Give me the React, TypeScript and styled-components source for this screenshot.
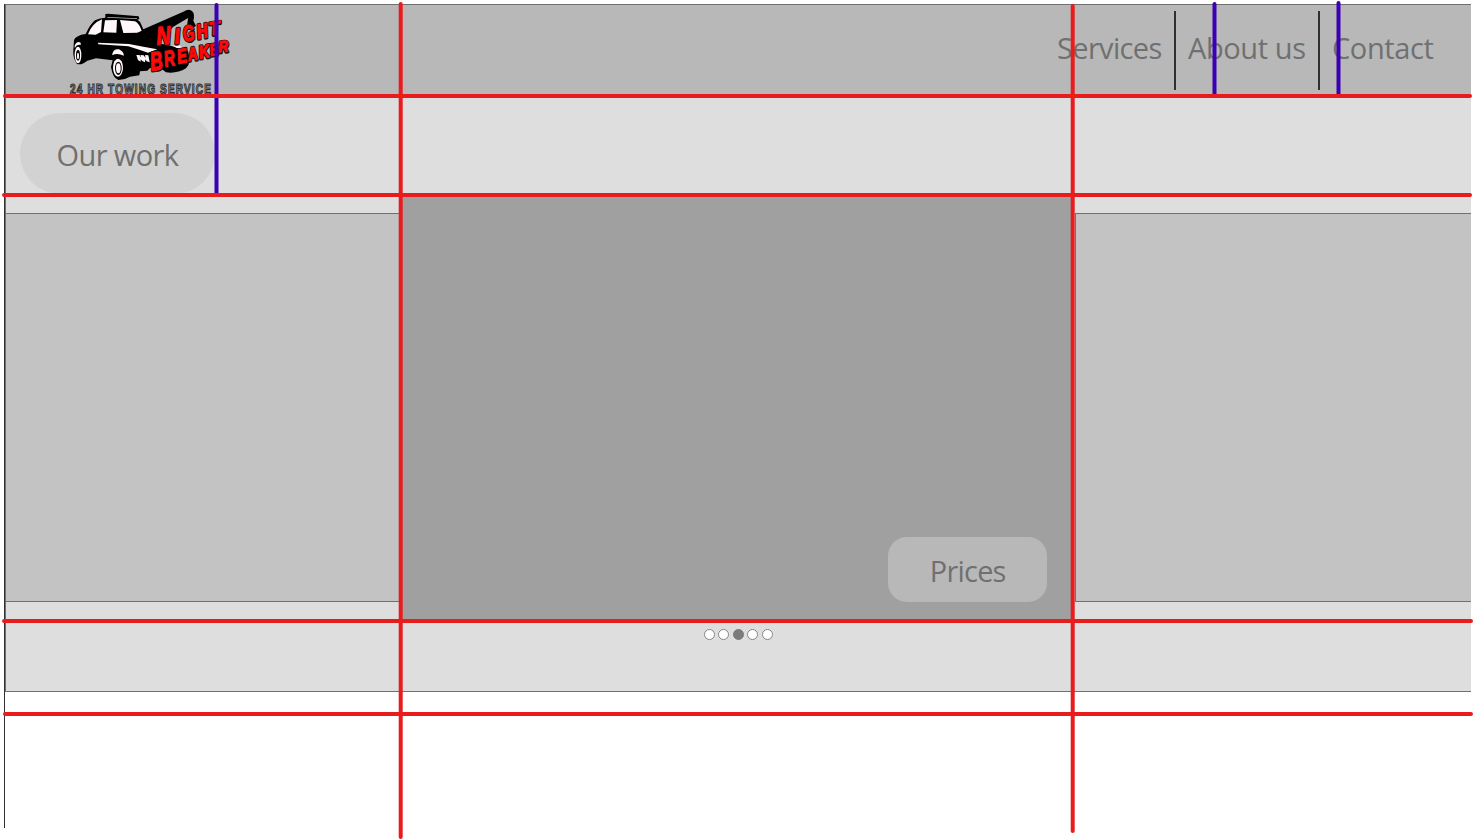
import React from "react";
import styled, { createGlobalStyle } from "styled-components";

const GlobalStyle = createGlobalStyle`
  * { box-sizing: border-box; }
  html, body { margin: 0; padding: 0; background: #ffffff; }
  body { font-family: "Open Sans", "Noto Sans", sans-serif; color: #707070; overflow: hidden; }
`;

const Page = styled.div`
  position: relative;
  width: 1473px;
  height: 839px;
  padding: 4px 2px 11px 4px;
  overflow: hidden;
`;

const Frame = styled.div`
  height: 824px;
  border-left: 1px solid #303030;
`;

const Header = styled.header`
  display: flex;
  justify-content: space-between;
  height: 92px;
  padding-left: 55px;
  padding-right: 25px;
  background: #b8b8b8;
  border-top: 1px solid #707070;
  border-left: 1px solid #707070;
`;

const LogoArt = styled.svg`
  display: block;
  width: 180px;
  height: 91px;
  margin-left: -1px;
`;

const Nav = styled.nav`
  display: flex;
  padding-top: 6px;
`;

const NavItem = styled.a<{ $width: number; $divided?: boolean }>`
  width: ${(p) => p.$width}px;
  height: 79px;
  padding-left: 12px;
  padding-top: 17px;
  border-left: ${(p) => (p.$divided ? "2px solid #303030" : "0")};
  font-size: 29px;
  line-height: 40px;
  white-space: nowrap;
`;

const Label = styled.span<{ $spacing: number }>`
  letter-spacing: ${(p) => p.$spacing}px;
  white-space: nowrap;
`;

const Work = styled.main`
  height: 596px;
  background: #dedede;
  border-left: 1px solid #707070;
  border-bottom: 1px solid #707070;
`;

const TitleRow = styled.div`
  height: 99px;
  padding: 17px 0 0 14px;
`;

const Pill = styled.h1`
  width: 195px;
  height: 81px;
  margin: 0;
  padding: 22px 0 0 36.5px;
  border-radius: 41px;
  background: #d2d2d2;
  font-size: 29px;
  font-weight: 400;
  line-height: 40px;
`;

const Carousel = styled.div`
  display: grid;
  grid-template-columns: 395px 673px 397px;
  height: 426px;
`;

const SideSlide = styled.div<{ $left?: boolean }>`
  height: 389px;
  margin-top: 18px;
  margin-left: ${(p) => (p.$left ? "1px" : "0")};
  background: #c3c3c3;
  border-top: 1px solid #707070;
  border-bottom: 1px solid #707070;
  border-left: ${(p) => (p.$left ? "1px solid #707070" : "0")};
`;

const MainSlide = styled.div`
  display: flex;
  justify-content: flex-end;
  align-items: flex-end;
  padding: 0 27.5px 19px 0;
  background: #a0a0a0;
`;

const PriceButton = styled.button`
  width: 158.5px;
  height: 65px;
  padding: 2px 0 0 1px;
  border: 0;
  border-radius: 19px;
  background: #b8b8b8;
  color: #707070;
  font: 400 29px/40px "Open Sans", "Noto Sans", sans-serif;
`;

const Dots = styled.div`
  display: flex;
  gap: 3.6px;
  padding: 7.5px 0 0 697.5px;
`;

const Dot = styled.span<{ $active?: boolean }>`
  width: 11px;
  height: 11px;
  border: 1px solid ${(p) => (p.$active ? "#7b7b7b" : "#858585")};
  border-radius: 50%;
  background: ${(p) => (p.$active ? "#7b7b7b" : "#ffffff")};
`;

const Guides = styled.svg`
  position: absolute;
  left: 0;
  top: 0;
  width: 1473px;
  height: 839px;
  pointer-events: none;
`;

type Glyph = { c: string; x: number; y: number; w: number; size: number; tilt: number };

const letters: Glyph[] = [
  { c: "N", x: 291, y: 134, w: 42, size: 76, tilt: -4 },
  { c: "I", x: 345, y: 131, w: 15, size: 66, tilt: -4 },
  { c: "G", x: 372, y: 125, w: 35, size: 66, tilt: -10 },
  { c: "H", x: 413, y: 117, w: 33, size: 62, tilt: -10 },
  { c: "T", x: 449, y: 106, w: 33, size: 56, tilt: -8 },
  { c: "B", x: 274, y: 212, w: 37, size: 78, tilt: -8 },
  { c: "R", x: 316, y: 200, w: 32, size: 66, tilt: -10 },
  { c: "E", x: 355, y: 191, w: 29, size: 61, tilt: -10 },
  { c: "A", x: 386, y: 183, w: 29, size: 56, tilt: -10 },
  { c: "K", x: 419, y: 176, w: 32, size: 55, tilt: -10 },
  { c: "E", x: 452, y: 168, w: 24, size: 50, tilt: -10 },
  { c: "R", x: 477, y: 157, w: 29, size: 47, tilt: -6 },
];

const Logo = () => (
  <LogoArt viewBox="0 15 540 273">
    <path d="M136 42L144 41L236 49L238 57L232 59L240 65L250 88L370 35Q388 24 398 35Q405 43 400 62L408 78L388 90L382 72L384 54L340 80L290 128L350 142L384 152Q395 190 378 205Q350 222 318 217L304 206L270 204L262 212L240 214L238 226L210 230Q193 240 175 240Q158 234 153 201L158 181L108 175L82 182Q65 196 51 192Q38 174 40 150L42 120Q48 106 77 102Q91 72 105 61Q120 53 136 53Z" fill="#000" />
    <path d="M84 103Q96 70 126 58L123 96L107 104Z M135 61L171 60L169 98L130 97Z M180 60L225 64Q237 69 245 92L232 98L190 99Z" fill="#fff7f9" />
    <path d="M142 51L231 55L231 57L142 53Z" fill="#b8b8b8" />
    <path d="M114 128L207 132L250 140L292 148L264 158L240 150L205 139L115 133Z" fill="#fff7f9" />
    <path d="M44 137Q50 122 62 128L62 135Q51 132 44 144Z M157 161Q162 145 177 148Q190 154 192 167Q170 158 157 166Z" fill="#fff7f9" />
    <ellipse cx="54" cy="165" rx="10" ry="25" fill="#fff7f9" />
    <ellipse cx="54" cy="166" rx="6" ry="16" fill="#000" />
    <ellipse cx="54" cy="168" rx="3" ry="10" fill="#fff7f9" />
    <ellipse cx="174" cy="203" rx="15" ry="27" fill="#fff7f9" />
    <ellipse cx="175" cy="205" rx="10" ry="20" fill="#000" />
    <ellipse cx="175" cy="205" rx="7" ry="15" fill="#fff7f9" />
    <path d="M229 165L238 165L244 173L241 165L251 166L257 174L255 165L265 166L269 187L260 184L256 178L255 187L247 183L242 178L242 185L234 180Z M339 138L350 130L368 144L350 144Z" fill="#fff7f9" />
    <g fontFamily="Liberation Sans, sans-serif" fontWeight="700" fontStyle="italic" fill="#ff0808" strokeLinejoin="round">
      {letters.map((l, i) => (
        <g key={i} transform={`translate(${l.x} ${l.y}) rotate(${l.tilt})`}>
          <text x="1" y="1" fontSize={l.size} textLength={l.w} lengthAdjust="spacingAndGlyphs" stroke="#111" strokeWidth="10" fill="#111">{l.c}</text>
          <text fontSize={l.size} textLength={l.w} lengthAdjust="spacingAndGlyphs" stroke="#ff0808" strokeWidth="3.5">{l.c}</text>
        </g>
      ))}
    </g>
    <text transform="translate(30 281) scale(0.72 1)" textLength="587" lengthAdjust="spacing" fontFamily="Liberation Sans, sans-serif" fontWeight="700" fontSize="42" fill="#a0a0a0" stroke="#303030" strokeWidth="3.4">24 HR TOWING SERVICE</text>
  </LogoArt>
);

export default function App() {
  return (
    <>
      <GlobalStyle />
      <Page>
        <Frame>
          <Header>
            <Logo />
            <Nav>
              <NavItem $width={129}><Label $spacing={-0.65}>Services</Label></NavItem>
              <NavItem $width={144} $divided><Label $spacing={-0.4}>About us</Label></NavItem>
              <NavItem $width={128} $divided><Label $spacing={-0.4}>Contact</Label></NavItem>
            </Nav>
          </Header>
          <Work>
            <TitleRow>
              <Pill><Label $spacing={-0.6}>Our work</Label></Pill>
            </TitleRow>
            <Carousel>
              <SideSlide />
              <MainSlide>
                <PriceButton><Label $spacing={-0.8}>Prices</Label></PriceButton>
              </MainSlide>
              <SideSlide $left />
            </Carousel>
            <Dots>
              <Dot /><Dot /><Dot $active /><Dot /><Dot />
            </Dots>
          </Work>
        </Frame>
        <Guides viewBox="0 0 1473 839" fill="none" strokeWidth="4" strokeLinecap="round">
          <path stroke="#3c00b4" d="M216.5 5V94M216.5 98V193M1214.5 4V94M1338.5 3V94" />
          <path stroke="#e81c1c" d="M5 96H1470M4 195H1470M4 621H1471M5 714H1471M400.7 4V837M1072.7 6V831" />
        </Guides>
      </Page>
    </>
  );
}
